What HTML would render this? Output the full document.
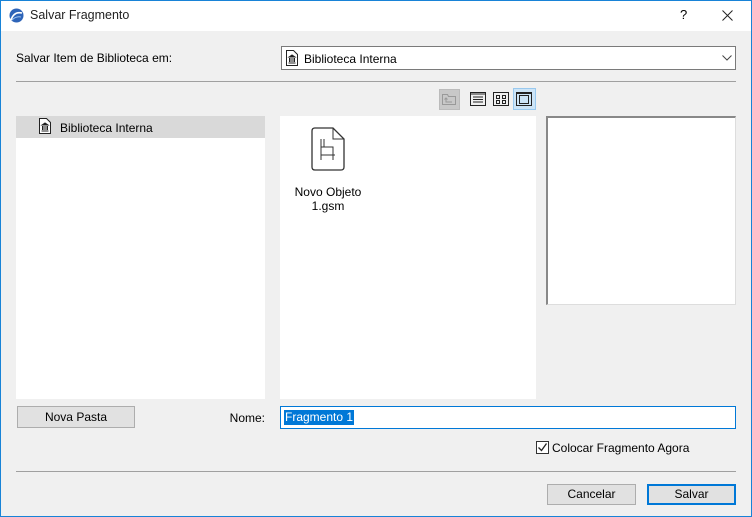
<!DOCTYPE html>
<html><head><style>
*{box-sizing:border-box;margin:0;padding:0}
body{width:752px;height:517px;background:#f0f0f0;font-family:"Liberation Sans",sans-serif;font-size:12px;color:#000;position:relative;overflow:hidden}
.a{position:absolute}
.btn{position:absolute;background:#e1e1e1;border:1px solid #adadad;text-align:center;font-size:12px}
</style></head><body>
<div class="a" style="left:0;top:0;width:752px;height:31px;background:#fff"></div>
<svg class="a" style="left:9px;top:8px" width="15" height="15" viewBox="0 0 15 15"><circle cx="7.5" cy="7.5" r="7" fill="#2e64b8"/><path d="M2 12 Q5 3 13 5" stroke="#fff" stroke-width="1.6" fill="none"/><path d="M3 12 Q7 8 12 9" stroke="#9cc3f0" stroke-width="1" fill="none"/></svg>
<div class="a" style="left:30px;top:8px;font-size:12.5px;color:#222">Salvar Fragmento</div>
<div class="a" style="left:680px;top:7px;font-size:13px">?</div>
<svg class="a" style="left:722px;top:10px" width="11" height="11"><path d="M.5 .5l10 10M10.5 .5l-10 10" stroke="#222"/></svg>
<div class="a" style="left:16px;top:51px">Salvar Item de Biblioteca em:</div>
<div class="a" style="left:281px;top:46px;width:455px;height:24px;background:#fff;border:1px solid #7a7a7a"></div>
<svg class="a" style="left:286px;top:50px" width="12" height="16" viewBox="0 0 12 16"><path d="M.5 .5h7l4 4v11h-11z" fill="#fff" stroke="#222"/><path d="M3 7l3-2 3 2zM3.5 8v4M5 8v4M7 8v4M8.5 8v4M2.5 13h7" stroke="#222" fill="#222"/></svg>
<div class="a" style="left:304px;top:52px">Biblioteca Interna</div>
<svg class="a" style="left:722px;top:55px" width="10" height="6"><path d="M.5 .5l4.5 4.5 4.5-4.5" stroke="#444" fill="none"/></svg>
<div class="a" style="left:16px;top:81px;width:720px;height:1px;background:#a0a0a0"></div>
<div class="a" style="left:439px;top:89px;width:21px;height:21px;background:#c8c8c8;border:1px solid #bbb"></div>
<svg class="a" style="left:442px;top:93px" width="15" height="13"><path d="M.5 1.5h5l1 2h7v8H.5z" fill="none" stroke="#999"/><path d="M4 5v4h6M2.5 6.5l1.5-1.5 1.5 1.5" stroke="#999" fill="none"/></svg>
<svg class="a" style="left:470px;top:92px" width="16" height="14"><rect x=".5" y=".5" width="15" height="13" fill="none" stroke="#222"/><path d="M0 2h16M3 5h10M3 7.5h10M3 10h10" stroke="#222"/></svg>
<svg class="a" style="left:493px;top:92px" width="16" height="14"><rect x=".5" y=".5" width="15" height="13" fill="none" stroke="#222"/><rect x="3.5" y="3.5" width="3" height="3" fill="none" stroke="#222"/><rect x="9.5" y="3.5" width="3" height="3" fill="none" stroke="#222"/><rect x="3.5" y="8.5" width="3" height="3" fill="none" stroke="#222"/><rect x="9.5" y="8.5" width="3" height="3" fill="none" stroke="#222"/></svg>
<div class="a" style="left:513px;top:88px;width:23px;height:22px;background:#cce4f7;border:1px solid #99c9ef"></div>
<svg class="a" style="left:516px;top:92px" width="16" height="14"><rect x=".5" y=".5" width="15" height="13" fill="none" stroke="#222"/><rect x="3.5" y="3.5" width="9" height="8" fill="none" stroke="#222"/><path d="M0 1.5h16" stroke="#222"/></svg>
<div class="a" style="left:16px;top:116px;width:249px;height:283px;background:#fff"></div>
<div class="a" style="left:16px;top:116px;width:249px;height:22px;background:#d9d9d9"></div>
<svg class="a" style="left:39px;top:118px" width="12" height="16" viewBox="0 0 12 16"><path d="M.5 .5h7l4 4v11h-11z" fill="#fff" stroke="#222"/><path d="M3 7l3-2 3 2zM3.5 8v4M5 8v4M7 8v4M8.5 8v4M2.5 13h7" stroke="#222" fill="#222"/></svg>
<div class="a" style="left:60px;top:121px">Biblioteca Interna</div>
<div class="a" style="left:280px;top:116px;width:256px;height:283px;background:#fff"></div>
<svg class="a" style="left:311px;top:127px" width="34" height="44" viewBox="0 0 34 44"><path d="M4 1h18l11 11v28q0 3-3 3H4q-3 0-3-3V4q0-3 3-3z" fill="#fff" stroke="#333" stroke-width="1.3"/><path d="M22 1v11h11" fill="none" stroke="#333" stroke-width="1"/><path d="M10 12v16h14M10 28v5M22 28v5M10 20h12v8M13 12v8" fill="none" stroke="#333"/></svg>
<div class="a" style="left:280px;top:185px;width:96px;text-align:center;line-height:14px">Novo Objeto<br>1.gsm</div>
<div class="a" style="left:546px;top:116px;width:190px;height:189px;background:#fff;border:1px solid #ddd;border-top:2px solid #888;border-left:2px solid #888"></div>
<div class="btn" style="left:17px;top:406px;width:118px;height:22px;line-height:20px">Nova Pasta</div>
<div class="a" style="left:200px;top:411px;width:65px;text-align:right">Nome:</div>
<div class="a" style="left:280px;top:406px;width:456px;height:23px;background:#fff;border:1px solid #0078d7"></div>
<div class="a" style="left:284px;top:410px;height:15px;padding:0 1px;background:#0078d7;color:#fff;line-height:15px">Fragmento 1</div>
<div class="a" style="left:536px;top:441px;width:13px;height:13px;background:#fff;border:1px solid #333"></div>
<svg class="a" style="left:537px;top:442px" width="11" height="11"><path d="M1.5 5.5l3 3 5-7" stroke="#222" stroke-width="1.3" fill="none"/></svg>
<div class="a" style="left:552px;top:441px">Colocar Fragmento Agora</div>
<div class="a" style="left:16px;top:471px;width:720px;height:1px;background:#a0a0a0"></div>
<div class="btn" style="left:547px;top:484px;width:89px;height:21px;line-height:19px">Cancelar</div>
<div class="btn" style="left:647px;top:484px;width:89px;height:21px;line-height:17px;border:2px solid #0078d7">Salvar</div>
<div class="a" style="left:0;top:0;width:752px;height:517px;border:1px solid #1883d7;pointer-events:none"></div>
</body></html>
